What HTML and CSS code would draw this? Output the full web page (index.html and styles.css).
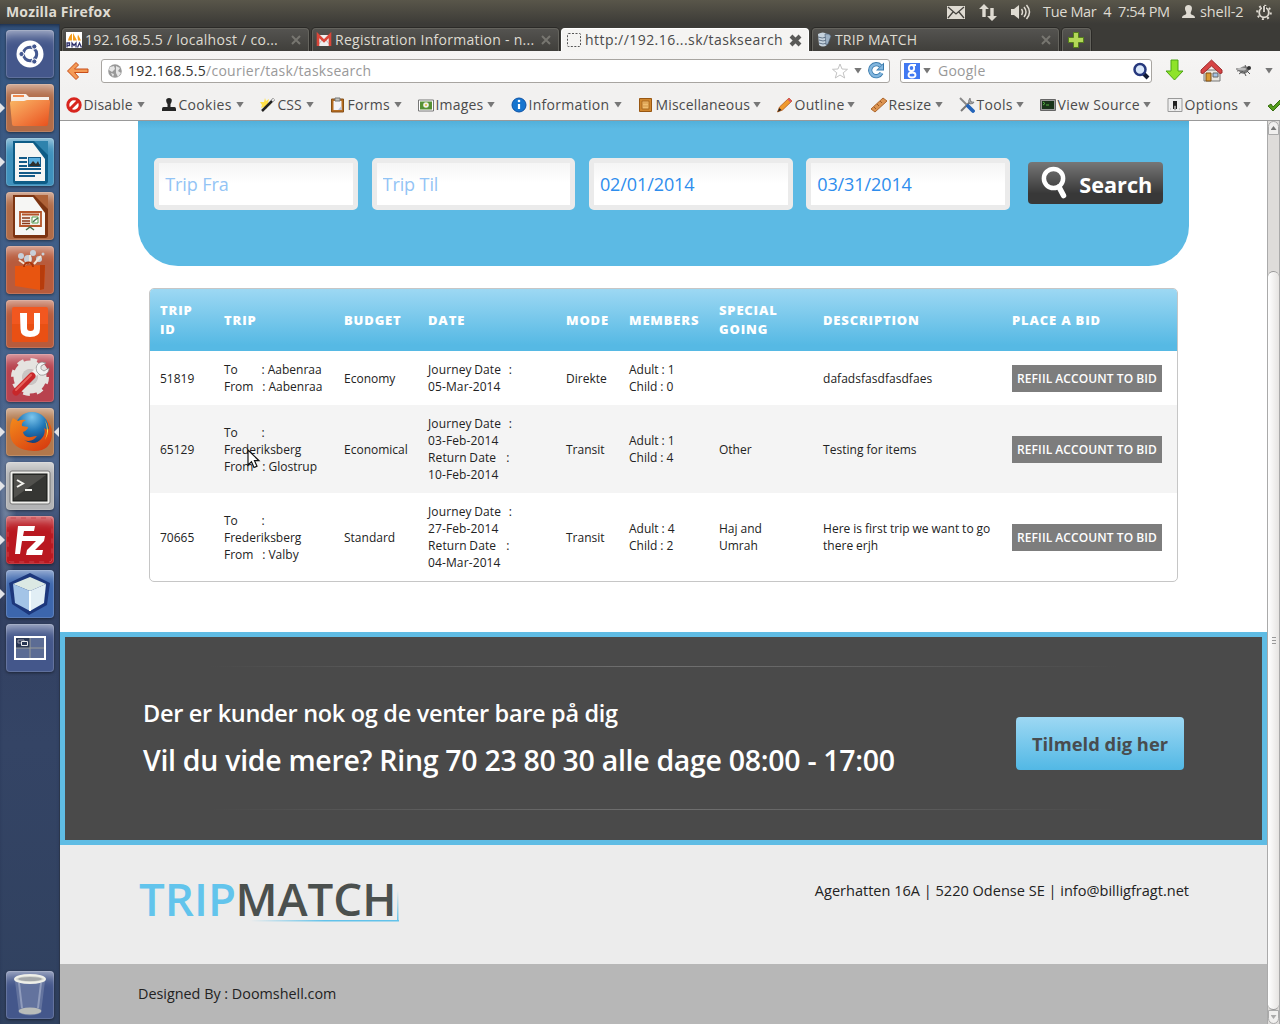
FILE: index.html
```
<!DOCTYPE html>
<html lang="en">
<head>
<meta charset="utf-8">
<title>Mozilla Firefox</title>
<link rel="stylesheet" href="styles.css">
</head>
<body>
<header class="panel">
  <b class="panel-title">Mozilla Firefox</b>
  <svg class="i-mail" width="18" height="13" viewBox="0 0 18 13"><rect width="18" height="13" fill="#dfdbd2"/><path d="M1 1l8 7 8-7M1 12l5-6M17 12l-5-6" fill="none" stroke="#45433e" stroke-width="1.3"/></svg>
  <svg class="i-net" width="18" height="17" viewBox="0 0 18 17"><path d="M5 0l5 5H6.700v8H3.300V5H0zM13 17l-5-5h3.300V4h3.400v8H18z" fill="#dfdbd2"/></svg>
  <svg class="i-vol" width="20" height="16" viewBox="0 0 20 16"><path d="M0 5h3l5-4v14l-5-4H0z" fill="#dfdbd2"/><path d="M10.500 5q2 3 0 6M13 3q4 5 0 10M15.500 1q6 7 0 14" fill="none" stroke="#dfdbd2" stroke-width="1.500"/></svg>
  <span class="clock">Tue Mar&nbsp; 4&nbsp; 7:54 PM</span>
  <svg class="i-user" width="13" height="14" viewBox="0 0 13 14"><path d="M6.500 0c4 0 4 4 2.600 6.500-.8 1.600-.6 3 1.400 3.500 1.700.5 2.500 1.300 2.500 3H0c0-1.700.8-2.500 2.500-3 2-.5 2.200-1.900 1.400-3.500C2.500 4 2.500 0 6.500 0z" fill="#dfdbd2"/></svg>
  <span class="session">shell-2</span>
  <svg class="i-gear" width="16" height="16" viewBox="0 0 16 16"><circle cx="8" cy="8.500" r="4.800" fill="none" stroke="#dfdbd2" stroke-width="1.800"/><circle cx="8" cy="8.500" r="6.800" fill="none" stroke="#dfdbd2" stroke-width="2" stroke-dasharray="2 3.340"/><path d="M8 2v6" stroke="#3f3e39" stroke-width="4"/><path d="M8 2v6" stroke="#dfdbd2" stroke-width="1.800"/></svg>
</header>
<div class="desktop">
<nav class="launcher">
  <div class="tile navy"><svg viewBox="0 0 48 48"><circle cx="24" cy="24" r="13.500" fill="#fff"/><circle cx="24" cy="24" r="6.700" fill="none" stroke="#445890" stroke-width="3" stroke-dasharray="12.500 1.500" stroke-dashoffset="6"/><g fill="#445890" stroke="#fff"><circle cx="15.500" cy="24" r="2.600"/><circle cx="28.300" cy="16.500" r="2.600"/><circle cx="28.300" cy="31.500" r="2.600"/></g></svg></div>
  <div class="tile brown run"><svg viewBox="0 0 48 48"><defs><linearGradient id="fold" x2="1" y2="1"><stop stop-color="#f9b765"/><stop offset=".5" stop-color="#f28344"/><stop offset="1" stop-color="#e8501c"/></linearGradient></defs><path d="M5 11q0-1 1-1h14l3 3h20v9H5z" fill="#f6f0ea"/><path d="M7 12h11" stroke="#f0894c" stroke-width="2"/><path d="M4 19q0-2 2-2h12l3-1h22q1 0 1 2l-2 22q0 2-2 2H8q-2 0-2-2z" fill="url(#fold)"/></svg></div>
  <div class="tile cyan run"><svg viewBox="0 0 48 48"><path d="M7 3h33q2 0 2 2v38q0 3-3 3H9q-2 0-2-3z" fill="#0e5c86"/><path d="M28 3h14v14z" fill="#2f83ad"/><path d="M9 5h18l12 16v22H9z" fill="#f6f6f4"/><path d="M13 20h8M13 24h8M13 28h8M13 31h22M13 35h22M13 38h16" stroke="#145b88" stroke-width="1.800"/><path d="M22 19h13v10H22z" fill="#145b88"/><path d="M23 20h11v6H23z" fill="#5aaede"/><path d="M23 28l4-5 3 3 2-3 2 5z" fill="#30302c"/></svg></div>
  <div class="tile brown"><svg viewBox="0 0 48 48"><path d="M7 3h33q2 0 2 2v38q0 3-3 3H9q-2 0-2-3z" fill="#7c3412"/><path d="M28 3h14v14z" fill="#ae6238"/><path d="M9 5h18l12 16v22H9z" fill="#f6f6f4"/><path d="M14 20h21v14H14z" fill="#f3eee8" stroke="#b4552a" stroke-width="1.800"/><path d="M16 22.500h17" stroke="#b4552a" stroke-width="2"/><path d="M16 26h8M16 29h8M16 31.500h8" stroke="#8a3918" stroke-width="1.500"/><path d="M26 25h6v6h-6z" fill="#fff" stroke="#55a14f"/><path d="M27 30l2-2 3-2M20 38l4-3 4 3" fill="none" stroke="#46704b" stroke-width="1.500"/></svg></div>
  <div class="tile rust"><svg viewBox="0 0 48 48"><g fill="#c8cfd8"><circle cx="15" cy="10" r="3"/><circle cx="27" cy="7" r="3"/><circle cx="22" cy="13" r="4"/><circle cx="33" cy="13" r="3"/><circle cx="37" cy="8" r="1.500"/></g><path d="M13 14l7 5M24 9v9M35 10l-7 8" stroke="#f3e4d4" stroke-width="2"/><path d="M9 20l30-1-1 24-4 1-25-4z" fill="#e85510"/><path d="M34 19l5 0-1 24-4 1z" fill="#b73c0c"/><path d="M18 21c0-6 9-6 9 0" fill="none" stroke="#ad3406" stroke-width="2"/></svg></div>
  <div class="tile rust"><svg viewBox="0 0 48 48"><rect x="6" y="7" width="36" height="35" rx="2" fill="#f2571f"/><path d="M6 24h36v16q0 2-2 2H8q-2 0-2-2z" fill="#e95014"/><path d="M14 13h7v15q0 3 3.500 3t3.500-3V13h6v16q0 8-10 8-9.500 0-9.500-8z" fill="#fff"/></svg></div>
  <div class="tile red"><svg viewBox="0 0 48 48"><circle cx="24" cy="23" r="12" fill="none" stroke="#e5e3e0" stroke-width="9"/><circle cx="24" cy="23" r="17" fill="none" stroke="#e5e3e0" stroke-width="4" stroke-dasharray="6.500 6.852"/><circle cx="24" cy="23" r="8" fill="#c9c5c4"/><path d="M35 13L25 23" stroke="#f4f2ef" stroke-width="6"/><path d="M26 22L10 38" stroke="#c8272a" stroke-width="7" stroke-linecap="round"/><path d="M25 21L10 36" stroke="#e8625c" stroke-width="2" stroke-linecap="round"/><path d="M31 18c-2-5 0-9 5-10l4 1-5 3v3l3 2 5-3c0 5-4 8-9 7z" fill="#f3f3f2" stroke="#888" stroke-width=".7"/></svg></div>
  <div class="tile tan run focus"><svg viewBox="0 0 48 48"><defs><radialGradient id="globe" cx=".5" cy=".15" r=".9"><stop stop-color="#7cc6ed"/><stop offset=".45" stop-color="#2178b8"/><stop offset="1" stop-color="#11285f"/></radialGradient><linearGradient id="fox" x2=".8" y2="1"><stop stop-color="#f48c1c"/><stop offset="1" stop-color="#d73c10"/></linearGradient></defs><circle cx="26" cy="21" r="17" fill="url(#globe)"/><path d="M7 10l5 3q4-2 8-1-5 2-4 6l6 1q0 3-5 5 1 6 8 5 4-1 6-1-5 7-13 4 11 7 18-2 4-5 2-10 4 3 5 0-1-8-5-11 8 6 8 16 0 18-18 18Q4 42 4 24 4 14 7 10z" fill="url(#fox)"/><path d="M39 12q6 11 0 20 4-9 0-20z" fill="#ffda44"/></svg></div>
  <div class="tile silver run"><svg viewBox="0 0 48 48"><rect x="4" y="9" width="40" height="33" rx="2" fill="#efefeb" stroke="#777"/><rect x="7" y="12" width="34" height="27" fill="#353633" stroke="#171816"/><path d="M8 13h32L8 36z" fill="#51514d"/><path d="M11 18l6 3.500-6 3.500M19 28h7" fill="none" stroke="#f4f4ef" stroke-width="2"/></svg></div>
  <div class="tile crimson run"><svg viewBox="0 0 48 48"><rect x="2" y="2" width="44" height="44" rx="3" fill="none" stroke="#c9464e" stroke-dasharray="5 5"/><path d="M12 10h17l-1 5H18l-1 5h9l-1 5h-9l-2 13H9zM24 20h15l-1 5-9 9h8l-1 5H20l1-5 9-9h-7z" fill="#fff"/></svg></div>
  <div class="tile blue run"><svg viewBox="0 0 48 48"><path d="M24 3l20 10-3 22-18 10L6 34 3 13z" fill="#1c377c"/><path d="M24 7l16 7-16 7-17-7z" fill="#dce9e4"/><path d="M7 14l17 7v20L9 33z" fill="#a3c4e7"/><path d="M24 21l16-7-2 19-14 8z" fill="#e1eef5"/><path d="M24 21v20" stroke="#f9ffff" stroke-width="2"/></svg></div>
  <div class="tile navy"><svg viewBox="0 0 48 48"><rect x="9" y="13" width="30" height="22" fill="#5c6c94"/><path d="M10 14h14v10H10z" fill="#293653"/><path d="M24 14v20M10 24h28" stroke="#999b98"/><rect x="9" y="13" width="30" height="22" fill="none" stroke="#fff" stroke-width="2"/><path d="M12 16h6v3h-6z" fill="none" stroke="#99a"/><path d="M15.500 17.500h6v4h-6z" fill="#293653" stroke="#eee"/></svg></div>
  <div class="tile navy trash"><svg viewBox="0 0 48 48"><path d="M9 10h30l-4 32q-11 5-22 0z" fill="#8290b1" fill-opacity=".5"/><path d="M13 12l3 25M35 12l-3 25" stroke="#aeb8d1" stroke-width="2" opacity=".6"/><ellipse cx="24" cy="40" rx="11.500" ry="3.500" fill="#b9bcba"/><ellipse cx="24" cy="8" rx="15" ry="4" fill="#d5d7d1" stroke="#eff0e9" stroke-width="2"/><ellipse cx="24" cy="8" rx="12" ry="2" fill="#a3a7aa"/></svg></div>
</nav>
<main class="browser">
  <div class="tabs">
    <div class="tab"><svg width="16" height="16"><path d="M0 0h16v16H0z" fill="#fff"/><path d="M2 8.500q1-5 4-7v7zM7 8.500V1l4 7.500zM12 8.500q-1-4 0-6l3 6z" fill="#f59d1c"/><path d="M1 15.500v-4.500h2.500v2.500H1M6 15.500V11l2 2.500 2-2.500v4.500M11.500 15.500l2-4.500 2 4.500" fill="none" stroke="#32346d" stroke-width="1.300"/></svg><span>192.168.5.5 / localhost / co...</span><i class="close"><svg width="10" height="10"><path d="M1 1l8 8M9 1L1 9"/></svg></i></div>
    <div class="tab"><svg width="16" height="16"><path d="M1 3h14v11H1z" fill="#eee"/><path d="M2 13l4-5M14 13l-4-5" stroke="#bbb"/><path d="M2 14V3l6 6 6-6v11" fill="none" stroke="#d94639" stroke-width="2.600"/></svg><span>Registration Information - n...</span><i class="close"><svg width="10" height="10"><path d="M1 1l8 8M9 1L1 9"/></svg></i></div>
    <div class="tab active"><svg width="16" height="16"><rect x="1.500" y="1.500" width="13" height="13" rx="1" fill="none" stroke="#555" stroke-dasharray="2 1.500"/></svg><span>http://192.16...sk/tasksearch</span><i class="close"><svg width="13" height="13"><path d="M2 2l9 9M11 2l-9 9"/></svg></i></div>
    <div class="tab"><svg width="16" height="16"><path d="M2 2q5-3 9 0v11q-4 3-8 0z" fill="#c6d3de"/><path d="M2 5q4 2 9 0M3 8q4 2 8 0M3 11q4 2 8 0" fill="none" stroke="#627488"/><path d="M9 2q4-1 6 2l-3 8-2 1z" fill="#9eb2c5" stroke="#46596e" stroke-width=".6"/></svg><span class="caps">TRIP MATCH</span><i class="close"><svg width="10" height="10"><path d="M1 1l8 8M9 1L1 9"/></svg></i></div>
    <div class="tab plus"><svg width="16" height="16"><path d="M5.500.5h5v5h5v5h-5v5h-5v-5h-5v-5h5z" fill="#b3d858" stroke="#547f1b"/></svg></div>
  </div>
  <div class="navbar">
    <svg class="back" width="24" height="20"><path d="M10 1.500L1.500 10l8.500 8.500 2.500-2.500-4-4.500H22v-3.500H8.500l4-4z" fill="#f49a55" stroke="#c84d18" stroke-linejoin="round"/></svg>
    <div class="urlbar">
      <svg width="14" height="14"><circle cx="7" cy="7" r="6.800" fill="#999"/><path d="M2 3l4-1 1 3-3 3-3-2zM8 2l4 2-2 3 3 2-3 4-2-4zM3 9l3 1-1 3z" fill="#e6e6e6"/></svg>
      <span class="url"><b>192.168.5.5</b>/courier/task/tasksearch</span>
      <svg class="star" width="16" height="16"><path d="M8 1l2 5 5.500.3-4.300 3.500 1.500 5.200L8 12l-4.700 3 1.500-5.200L.5 6.300 6 6z" fill="#fff" stroke="#c3c3c3"/></svg>
      <i class="tri"></i>
      <svg class="reload" width="17" height="17"><path d="M13.500 11a6 6 0 1 1-1-7" fill="none" stroke="#397aac" stroke-width="4.200"/><path d="M16 .5v8H8z" fill="#397aac"/><path d="M13.500 11a6 6 0 1 1-1-7" fill="none" stroke="#83b7df" stroke-width="2.500"/><path d="M15 2.500v5h-5z" fill="#83b7df"/></svg>
    </div>
    <div class="searchbar">
      <div class="g"><svg width="16" height="16"><path d="M0 0h16v16H0z" fill="#4179f2"/><g fill="none" stroke="#fff" stroke-width="1.800"><ellipse cx="7.500" cy="5" rx="2.700" ry="3"/><ellipse cx="8" cy="12" rx="3.500" ry="2.500"/><path d="M8 2h4M8 8q-2 .8 0 2"/></g></svg></div>
      <i class="tri"></i><span>Google</span>
      <svg width="18" height="18"><path d="M11 11l5 5" stroke="#111a32" stroke-width="4"/><circle cx="8" cy="7.500" r="5.500" fill="#d9e7fa" stroke="#26387d" stroke-width="2.500"/></svg>
    </div>
    <svg class="down" width="20" height="23"><path d="M6 1h7v11h5l-8.500 9L1 12h5z" fill="#8ee329" stroke="#4ca514"/></svg>
    <svg class="home" width="23" height="23"><path d="M4 11h16v11H4z" fill="#e9e6df" stroke="#777"/><path d="M6 14h5v8H6z" fill="#db9a31" stroke="#805017"/><path d="M13 14h5v4h-5z" fill="#a5c4e5" stroke="#666"/><path d="M11.500 1L1 11v3l2 .5 8.500-7.500 8.500 7.500 2-.5v-3z" fill="#d74444" stroke="#9d2d2e"/></svg>
    <svg class="bug" width="18" height="14"><ellipse cx="10" cy="6" rx="5" ry="3.500" transform="rotate(-15 10 6)" fill="#777"/><circle cx="15" cy="4" r="2" fill="#333"/><path d="M3 7l5-1M5 10l4-3M10 8l2 4M13 7l3 3M2 5l6 0M12 3l-1-2" stroke="#555"/><ellipse cx="8" cy="5" rx="4" ry="1.500" fill="#bbb"/></svg>
    <i class="tri last"></i>
  </div>
  <div class="devbar">
    <div><svg width="16" height="16"><circle cx="8" cy="8" r="6.200" fill="#fff" stroke="#d8251e" stroke-width="3"/><path d="M3.500 12.500l9-9" stroke="#d8251e" stroke-width="3"/></svg><span class="wide">Disable</span><i class="tri"></i></div>
    <div><svg width="16" height="16"><path d="M8 1c4 0 3 4 1.500 6v3h4q1.500 0 1.500 2v2H1v-2q0-2 1.500-2h4V7C5 5 4 1 8 1z" fill="#252525"/></svg><span class="wider">Cookies</span><i class="tri"></i></div>
    <div><svg width="16" height="16"><path d="M5 1l1 3 3-2-1 4 3 2-4 1 0 3-3-2-3 1 1-3-2-3 4 0z" fill="#ffe04a"/><path d="M2 14L14 2" stroke="#222" stroke-width="2.500"/><path d="M12 4l2-2" stroke="#eee" stroke-width="2"/></svg><span>CSS</span><i class="tri"></i></div>
    <div><svg width="16" height="16"><path d="M1.500 2h12v13h-12z" fill="#b76d22" stroke="#875118"/><path d="M3.500 4h8v9h-8z" fill="#f5f5fa"/><path d="M8 13l3.500-4v4z" fill="#b7c3df"/><path d="M5 1h5v3H5z" fill="#c2c2bd" stroke="#777"/></svg><span class="wider">Forms</span><i class="tri"></i></div>
    <div><svg width="16" height="16"><path d="M.5 3h15v11H.5z" fill="#fff" stroke="#777"/><path d="M2 4.500h12v8H2z" fill="#569034"/><circle cx="8" cy="8" r="2.800" fill="#f0f0e7"/><circle cx="8" cy="8" r="1" fill="#e3be31"/></svg><span class="wide">Images</span><i class="tri"></i></div>
    <div><svg width="16" height="16"><circle cx="8" cy="8" r="7" fill="#1675cf" stroke="#0b51a6"/><path d="M8 7v5" stroke="#fff" stroke-width="2.200"/><circle cx="8" cy="4" r="1.300" fill="#fff"/></svg><span class="wider">Information</span><i class="tri"></i></div>
    <div><svg width="16" height="16"><path d="M1.500 1.500h12v13h-12z" fill="#cf862e" stroke="#985712"/><path d="M4 4h7v8H4z" fill="#f0bd70" stroke="#a96821"/><path d="M4 6h7M4 9h7" stroke="#d39748"/></svg><span class="wide">Miscellaneous</span><i class="tri"></i></div>
    <div><svg width="16" height="16"><path d="M.5 15l2-5L12 1l3 3-9.500 9z" fill="#f09a2c" stroke="#b55b1b" stroke-width=".8"/><path d="M12 1l3 3-1.500 1.500-3-3z" fill="#df5964"/><path d="M.5 15l2-4 2 2z" fill="#222"/></svg><span class="wider">Outline</span><i class="tri"></i></div>
    <div><svg width="16" height="16"><path d="M0 12L12 1l4 3L4 15z" fill="#dc9451" stroke="#ad662c"/><path d="M3 10l2 2M6 7l2 2M9 4l2 2" stroke="#8b4a1a" stroke-width=".8"/></svg><span class="wider">Resize</span><i class="tri"></i></div>
    <div><svg width="16" height="16"><path d="M2 14L12 4" stroke="#777" stroke-width="2"/><path d="M11 1l1 4 3 0q0 2-4 2-3-3 0-6z" fill="#aaa" stroke="#666" stroke-width=".6"/><path d="M1 1l8 8" stroke="#888" stroke-width="2"/><path d="M9 9l5 5" stroke="#2464b9" stroke-width="3.800" stroke-linecap="round"/></svg><span class="wider">Tools</span><i class="tri"></i></div>
    <div><svg width="16" height="16"><path d="M.5 2.500h15v11H.5z" fill="#999" stroke="#666"/><path d="M2 4h12v8H2z" fill="#183219"/><path d="M3 5l2 1.500L3 8M6 8h3" fill="none" stroke="#54b443"/></svg><span class="wider">View Source</span><i class="tri"></i></div>
    <div><svg width="16" height="16"><path d="M1 1.500h14v13H1z" fill="#eee" stroke="#999"/><path d="M6 4h4v8H6z" fill="#222"/><path d="M7.500 9h1v4h-1zM3 12h1M12 12h1" fill="#fff" stroke="#999" stroke-width=".7"/></svg><span class="wider">Options</span><i class="tri"></i></div>
    <div><svg width="16" height="16"><path d="M1 9l3-2 2 3 8-8 2 2L6 14z" fill="#559c1c" stroke="#356d0c"/></svg></div>
  </div>
  <div class="viewport">
    <div class="page">
      <form class="finder">
        <input type="text" placeholder="Trip Fra"><input type="text" placeholder="Trip Til"><input type="text" value="02/01/2014"><input type="text" value="03/31/2014">
        <button type="button"><svg width="27" height="34"><circle cx="12.500" cy="12.500" r="9.600" fill="none" stroke="#fff" stroke-width="4.500"/><path d="M18 21l4.500 8.500" stroke="#fff" stroke-width="5.500" stroke-linecap="round"/></svg><span>Search</span></button>
      </form>
      <div class="trips"><table>
        <colgroup><col class="c1"><col class="c2"><col class="c3"><col class="c4"><col class="c5"><col class="c6"><col class="c7"><col class="c8"><col class="c9"></colgroup>
        <thead><tr><th>TRIP ID</th><th>TRIP</th><th>BUDGET</th><th>DATE</th><th>MODE</th><th>MEMBERS</th><th>SPECIAL GOING</th><th>DESCRIPTION</th><th>PLACE A BID</th></tr></thead>
        <tbody>
        <tr><td>51819</td><td>To&nbsp;&nbsp;&nbsp;&nbsp;&nbsp;&nbsp;&nbsp; : Aabenraa<br>From&nbsp;&nbsp; : Aabenraa</td><td>Economy</td><td>Journey Date&nbsp;&nbsp; :<br>05-Mar-2014</td><td>Direkte</td><td>Adult : 1<br>Child : 0</td><td></td><td>dafadsfasdfasdfaes</td><td><a class="bid">REFIIL ACCOUNT TO BID</a></td></tr>
        <tr><td>65129</td><td>To&nbsp;&nbsp;&nbsp;&nbsp;&nbsp;&nbsp;&nbsp; :<br>Frederiksberg<br>From&nbsp;&nbsp; : Glostrup</td><td>Economical</td><td>Journey Date&nbsp;&nbsp; :<br>03-Feb-2014<br>Return Date&nbsp;&nbsp;&nbsp; :<br>10-Feb-2014</td><td>Transit</td><td>Adult : 1<br>Child : 4</td><td>Other</td><td>Testing for items</td><td><a class="bid">REFIIL ACCOUNT TO BID</a></td></tr>
        <tr><td>70665</td><td>To&nbsp;&nbsp;&nbsp;&nbsp;&nbsp;&nbsp;&nbsp; :<br>Frederiksberg<br>From&nbsp;&nbsp; : Valby</td><td>Standard</td><td>Journey Date&nbsp;&nbsp; :<br>27-Feb-2014<br>Return Date&nbsp;&nbsp;&nbsp; :<br>04-Mar-2014</td><td>Transit</td><td>Adult : 4<br>Child : 2</td><td>Haj and Umrah</td><td>Here is first trip we want to go there erjh</td><td><a class="bid">REFIIL ACCOUNT TO BID</a></td></tr>
        </tbody>
      </table></div>
      <section class="callout">
        <div class="copy"><p class="lead">Der er kunder nok og de venter bare på dig</p><p class="phone">Vil du vide mere? Ring 70 23 80 30 alle dage 08:00 - 17:00</p></div>
        <a class="signup">Tilmeld dig her</a>
      </section>
      <footer class="foot">
        <svg class="logo" width="262" height="70"><defs><linearGradient id="ul"><stop stop-color="#62c2ea" stop-opacity="0"/><stop offset=".5" stop-color="#62c2ea"/></linearGradient><linearGradient id="ur" x2="0" y2="1"><stop stop-color="#62c2ea" stop-opacity="0"/><stop offset="1" stop-color="#62c2ea"/></linearGradient></defs><text x="1" y="51" textLength="97" lengthAdjust="spacingAndGlyphs" fill="#62c4ec">TRIP</text><text x="97.500" y="51" textLength="161" lengthAdjust="spacingAndGlyphs" fill="#4b504e">MATCH</text><rect x="112" y="55" width="149" height="1.500" fill="url(#ul)"/><rect x="259" y="25" width="1.500" height="31" fill="url(#ur)"/></svg>
        <address>Agerhatten 16A | 5220 Odense SE | info@billigfragt.net</address>
      </footer>
      <div class="credit">Designed By : Doomshell.com</div>
    </div>
    <div class="scroll"><i class="up"></i><div class="thumb"><b></b></div><i class="dn"></i></div>
  </div>
</main>
</div>
<svg class="pointer" width="14" height="20"><path d="M1 1v15l3.500-3.200L7 18.500l3-1.300-2.500-5.500H12z" fill="#fff" stroke="#111" stroke-width="1.200"/></svg>
</body>
</html>
```
FILE: styles.css
```
* { box-sizing: border-box; }
body { margin: 0; width: 1280px; height: 1024px; overflow: hidden; display: flex; flex-direction: column; background: #fff; font-family: "Open Sans", "Noto Sans", sans-serif; color: #222; }
svg { display: block; flex: none; }
i { font-style: normal; flex: none; }
p { margin: 0; }

/* Desktop panel */
.panel { height: 24px; flex: none; display: flex; align-items: center; background: linear-gradient(#59564a, #3c3b37); color: #dfdbd2; font: 14.5px/24px "Open Sans", sans-serif; white-space: nowrap; }
.panel-title { flex: 1; padding-left: 6px; letter-spacing: .15px; font-size: 14px; }
.i-net { margin-left: 14px; }
.i-vol { margin-left: 14px; }
.clock { width: 126px; margin-left: 12px; letter-spacing: -.35px; }
.i-user { margin-left: 13px; }
.session { width: 46px; margin-left: 5px; letter-spacing: -.1px; }
.i-gear { margin: 0 8px 0 10px; }

/* Launcher */
.desktop { flex: 1; display: flex; min-height: 0; }
.launcher { width: 60px; flex: none; padding: 6px 6px 5px; display: flex; flex-direction: column; gap: 6px; background: radial-gradient(ellipse at 10% 48%, #71829f 0, transparent 14%), linear-gradient(#355580 0, #45628b 30%, #50678e 47%, #323f60 52%, #344465 72%, #30415f 100%); border-right: 1px solid #2b364b; box-shadow: inset 0 4px 5px -3px #14223b; }
.tile { width: 48px; height: 48px; flex: none; border-radius: 4px; position: relative; box-shadow: inset 0 0 0 1px #ffffff26, inset 0 13px 12px -9px #fff9, 0 1px 3px #0007; }
.tile svg { width: 48px; height: 48px; }
.navy { background: #44578b; }
.brown { background: #b16b47; }
.cyan { background: #3e91bd; }
.rust { background: #b85b3c; }
.red { background: #b8424e; }
.tan { background: #b2784c; }
.silver { background: #b3b4b5; }
.crimson { background: #b91820; }
.blue { background: #3c66ad; }
.trash { margin-top: auto; }
.run::before, .focus::after { content: ""; position: absolute; top: 19px; border: 5px solid transparent; }
.run::before { left: -6px; border-left-color: #e2e4e8; border-right: 0; }
.focus::after { right: -5px; border-right-color: #e2e4e8; border-left: 0; }

/* Browser chrome */
.browser { flex: 1; min-width: 0; display: flex; flex-direction: column; font-size: 14px; color: #4b4b4b; }
.tabs { height: 27px; flex: none; display: flex; gap: 3px; padding: 4px 2px 0; background: #3c3b37; }
.tab { width: 247px; flex: none; display: flex; align-items: center; padding-left: 3px; border: 1px solid #65645e; border-bottom: 0; border-radius: 4px 4px 0 0; background: linear-gradient(#545350, #403f3b); color: #dfdbd2; line-height: 22px; white-space: nowrap; box-shadow: 0 0 0 1px #2b2a27; }
.tab span { flex: 1; margin-left: 3px; letter-spacing: .27px; }
.tab .caps { letter-spacing: .15px; }
.tab.active { background: #f5f4f2; border-color: #fff; color: #4a4a4a; width: 248px; margin-left: -1px; padding-left: 4px; box-shadow: none; }
.tab.active span { letter-spacing: .45px; }
.tab.plus { width: 29px; padding-left: 5px; }
.close { margin-right: 7px; }
.close path { fill: none; stroke: #777670; stroke-width: 2; }
.active .close { margin-right: 6px; }
.active .close path { stroke: #595957; stroke-width: 4; }
.tri { width: 8px; height: 6px; background: #777; clip-path: polygon(0 0, 100% 0, 50% 100%); }
.navbar { height: 39px; flex: none; display: flex; align-items: center; background: linear-gradient(#f6f5f4, #f2f1f0); padding-left: 6px; }
.urlbar, .searchbar { height: 24px; display: flex; align-items: center; border: 1px solid #a8a5a1; border-radius: 3px; background: #fff; line-height: 22px; }
.urlbar { width: 789px; margin-left: 11px; padding-left: 6px; color: #999; }
.url { flex: 1; margin-left: 6px; letter-spacing: .27px; }
.url b { font-weight: 400; color: #333; }
.urlbar .tri { margin: 0 6px; }
.reload { margin-right: 4px; }
.searchbar { width: 252px; margin-left: 10px; padding: 0 1px 0 3px; color: #999; }
.searchbar .tri { margin: 0 7px 0 3px; }
.searchbar span { flex: 1; letter-spacing: .25px; }
.down { margin-left: 13px; }
.home { margin-left: 15px; }
.bug { margin-left: 11px; }
.last { margin-left: 13px; }
.devbar { height: 31px; flex: none; display: grid; grid-template-columns: 95px 99px 70px 88px 93px 127px 139px 94px 88px 81px 127px 100px 16px; padding-left: 6px; background: #f2f1f0; border-bottom: 1px solid #999; overflow: hidden; }
.devbar div { display: flex; align-items: center; height: 29px; padding-right: 16px; white-space: nowrap; }
.devbar div:last-child { padding: 0; }
.devbar span { flex: 1; margin-left: 1.500px; }
.devbar .wide { letter-spacing: .17px; }
.devbar .wider { letter-spacing: .3px; }

/* Web page */
.viewport { flex: 1; min-height: 0; display: flex; }
.page { width: 1207px; display: flex; flex-direction: column; color: #222; }
.finder { width: 1051px; height: 145px; flex: none; margin-left: 78px; padding: 37px 0 0 16.300px; display: flex; align-items: flex-start; gap: 13.670px; border-radius: 0 0 40px 40px; background: linear-gradient(#52b0da, #5cbae4 8px); }
.finder input { width: 203.670px; height: 52px; padding: 0 6px; border: 5px solid #ebebeb; border-radius: 5px; background: linear-gradient(#f5f5f5, #fff 20px); font: 18px "Open Sans", sans-serif; letter-spacing: -.1px; color: #2e8ded; outline: 0; }
.finder input::placeholder { color: #93c4f5; opacity: 1; }
.finder button { width: 135px; height: 42px; margin: 4px 0 0 4.700px; padding: 0 0 0 13px; display: flex; border: 0; border-radius: 4px; background: linear-gradient(#777, #383838 75%); color: #fff; font: bold 21.700px/46px "Open Sans", sans-serif; }
.finder button svg { margin-top: 4px; }
.finder button span { margin-left: 11px; }
.trips { width: 1029px; flex: none; margin: 22px 0 0 89px; border: 1px solid #c6c6c6; border-radius: 5px; overflow: hidden; }
.trips table { width: 1027px; table-layout: fixed; border-collapse: collapse; font-size: 12px; line-height: 17px; }
.c1 { width: 64px; } .c2 { width: 120px; } .c3 { width: 84px; } .c4 { width: 138px; } .c5 { width: 63px; } .c6 { width: 90px; } .c7 { width: 104px; } .c8 { width: 189px; } .c9 { width: 175px; }
.trips thead { background: linear-gradient(#9dd8f3, #56b9e4 90%); }
.trips th { height: 62px; padding: 0 10px; text-align: left; color: #fff; font: 800 13px/19px "Open Sans", sans-serif; letter-spacing: .83px; }
.trips th:nth-child(6) { padding-right: 0; }
.trips td { padding: 10px; word-spacing: -.15px; }
.trips td:nth-child(4) { letter-spacing: .12px; word-spacing: -.7px; }
.trips td:nth-child(8) { letter-spacing: .04px; word-spacing: -.3px; }
.trips tbody tr:nth-child(2) { background: #f4f4f4; }
.bid { display: block; width: 150px; height: 27px; background: #7d7d7d; color: #fff; font: 600 12px/27px "Open Sans", sans-serif; letter-spacing: .1px; text-align: center; white-space: nowrap; }
.callout { height: 213px; flex: none; margin-top: 50px; padding: 0 78px; display: flex; justify-content: space-between; align-items: flex-start; border: 5px solid #5fbce4; background: linear-gradient(90deg, transparent 12%, #717171 50%, transparent 88%) 0 29px / 100% 1px no-repeat, linear-gradient(90deg, transparent 12%, #717171 50%, transparent 88%) 0 172px / 100% 1px no-repeat, #4a4a4a; color: #fff; font-weight: 600; white-space: nowrap; }
.copy { padding-top: 60px; }
.lead { font-size: 23.500px; line-height: 33px; letter-spacing: -.31px; }
.phone { margin-top: 10px; font-size: 28.500px; line-height: 40px; letter-spacing: -.3px; }
.signup { width: 168px; height: 53px; margin-top: 80px; border-radius: 4px; background: linear-gradient(#9dd8f3, #52b8e5); color: #484c4f; font: bold 18.350px/54px "Open Sans", sans-serif; text-align: center; }
.foot { height: 119px; flex: none; padding: 20px 78px 0; display: flex; justify-content: space-between; background: #ececec; }
.logo text { font: 600 45.500px "Open Sans", sans-serif; }
.foot address { margin-top: 12px; font-style: normal; font-size: 14.540px; line-height: 26px; }
.credit { flex: 1; background: #b7b7b7; padding: 17px 78px; font-size: 14.370px; line-height: 26px; }

/* Scrollbar */
.scroll { width: 13px; display: flex; flex-direction: column; background: #dedcda; border-left: 1px solid #aaa; border-right: 1px solid #aaa; }
.up, .dn { height: 14px; display: grid; place-items: center; background: #f0efee; border: 1px solid #aaa; border-radius: 6px 6px 0 0; }
.dn { border-radius: 0 0 6px 6px; }
.up::before, .dn::before { content: ""; width: 6px; height: 4px; background: #777; clip-path: polygon(50% 0, 100% 100%, 0 100%); }
.dn::before { transform: scaleY(-1); background: #aaa; }
.thumb { flex: 1; margin-top: 136px; border: 1px solid #999; border-width: 1px 0; border-radius: 6px; background: linear-gradient(90deg, #fff, #e6e4e2); display: grid; place-items: center; }
.thumb b { width: 4px; height: 7px; background: repeating-linear-gradient(#999 0 1px, transparent 1px 3px); }

.pointer { position: absolute; left: 247px; top: 449px; }
```
